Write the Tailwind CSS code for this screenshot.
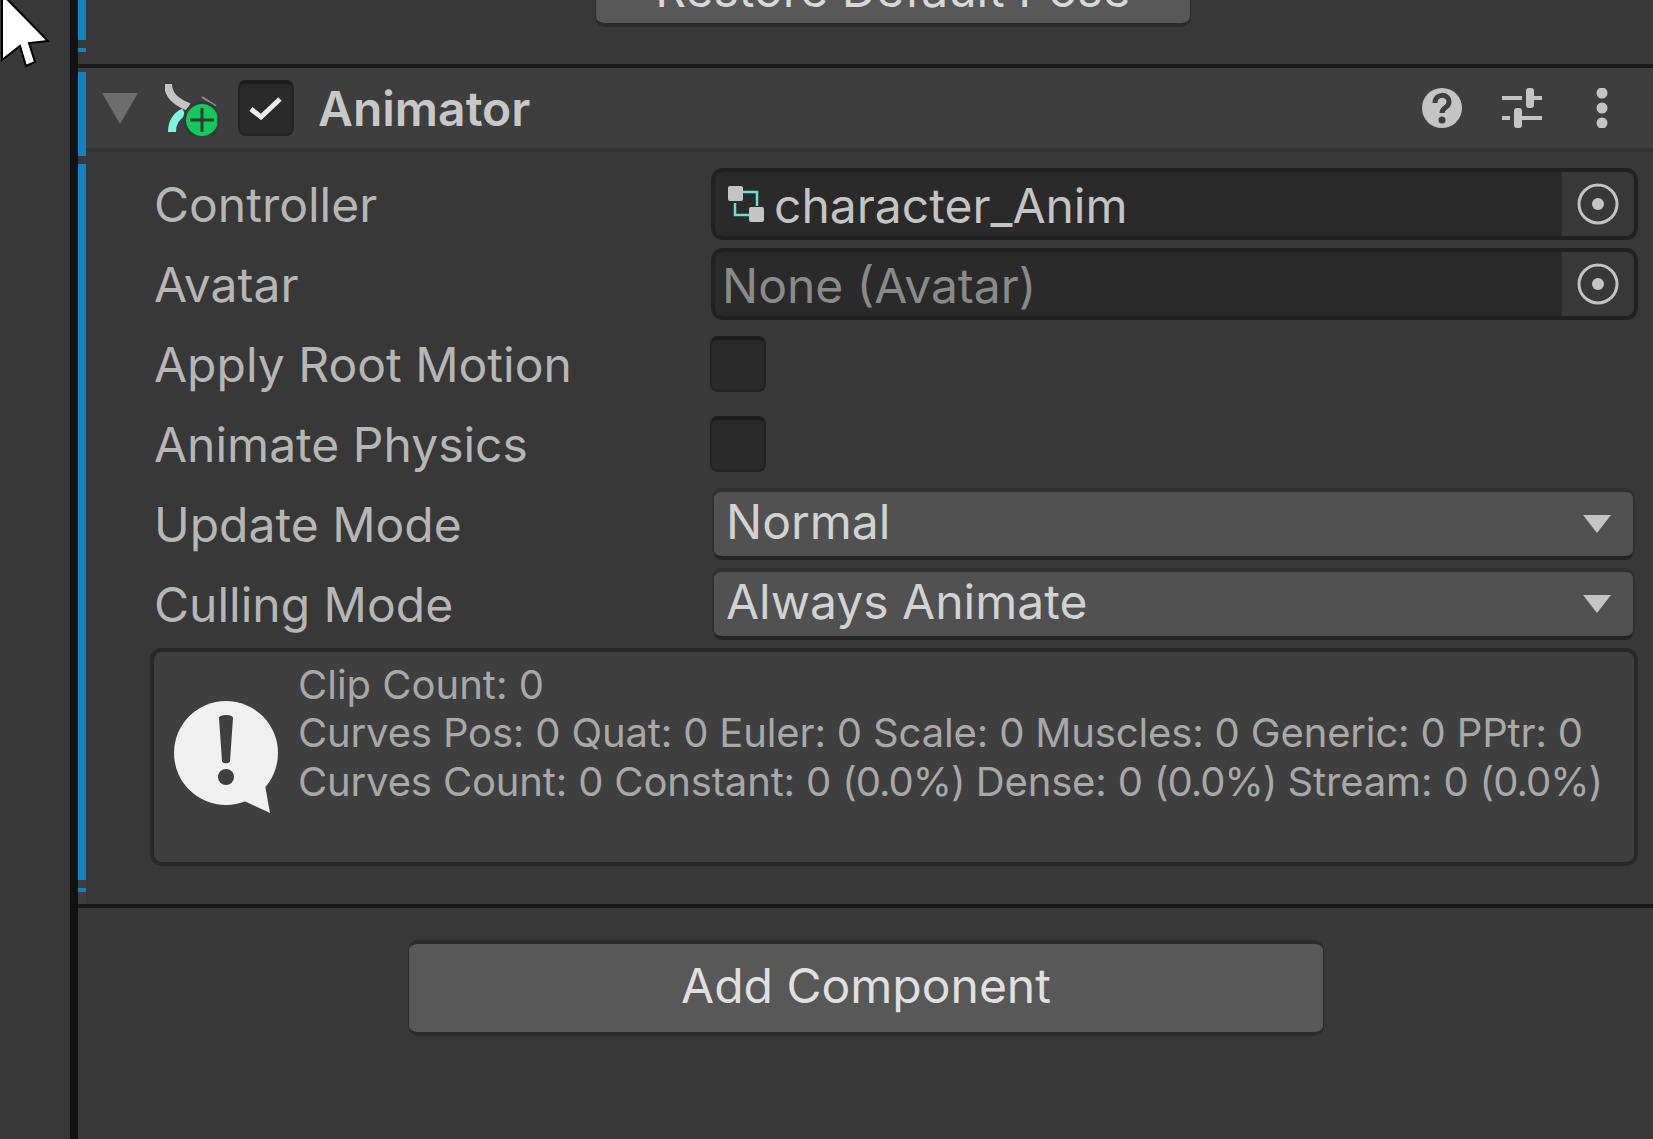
<!DOCTYPE html>
<html lang="en">
<head>
  <meta charset="UTF-8">
  <title>Inspector - Animator</title>
  <script src="https://cdn.jsdelivr.net/npm/@tailwindcss/browser@4"></script>
</head>
<body class="bg-[#383838] font-['Inter',sans-serif] text-[#b6b6b6] text-[48px] leading-none overflow-hidden h-[1139px] w-[1653px] relative">
  <div class="flex h-[1139px]">
    <!-- Left strip -->
    <div class="w-[78px] shrink-0 bg-[#383838] border-r-[8px] border-[#111111]"></div>

    <div class="flex-1 flex flex-col min-w-0">
      <!-- Transform section, scrolled off -->
      <div class="flex h-[64px] shrink-0 overflow-hidden">
        <div class="w-2 shrink-0 flex flex-col">
          <div class="h-[40px] bg-[#0d84c7]"></div>
          <div class="h-1 mt-2 bg-[#0d84c7]"></div>
        </div>
        <div class="ml-[509px] -mt-[53px] w-[596px] h-[80px] flex items-center justify-center pt-[6px] bg-[#585858] border-4 border-x-[1px] border-[#2a2a2a] rounded-[10px] text-[#d8d8d8]">Restore Default Pose</div>
      </div>
      <div class="h-1 shrink-0 bg-[#191919]"></div>

      <!-- Animator section -->
      <div class="flex shrink-0">
        <div class="w-2 shrink-0 flex flex-col pt-1 bg-[#3e3e3e]">
          <div class="h-[84px] bg-[#0d84c7]"></div>
          <div class="h-2 bg-[#383838]"></div>
          <div class="h-[716px] bg-[#0d84c7]"></div>
          <div class="h-1 mt-2 bg-[#0d84c7]"></div>
        </div>
        <div class="flex-1 min-w-0">
          <!-- Header -->
          <div class="h-[84px] bg-[#3e3e3e] border-b-4 border-[#333333] flex items-center">
            <svg class="ml-[16px] shrink-0" width="36" height="32" viewBox="0 0 36 32"><polygon points="0,1 36,1 18,32" fill="#6e6e6e"/></svg>
            <svg class="ml-[27px] shrink-0" width="52" height="56" viewBox="0 0 52 56">
              <path d="M3 4 C3 14 10 22 24 27" fill="none" stroke="#c4c4c4" stroke-width="8"/>
              <path d="M19 32 C11 36 7 42 7 52" fill="none" stroke="#7ff5e0" stroke-width="8"/>
              <path d="M37 17 L51 26" fill="none" stroke="#8a8a8a" stroke-width="2"/>
              <circle cx="37" cy="40" r="19" fill="#383838"/>
              <circle cx="37" cy="40" r="16" fill="#12c960"/>
              <path d="M37 28 V52 M25 40 H49" stroke="#2b3b30" stroke-width="3"/>
            </svg>
            <div class="ml-[21px] w-[56px] h-[56px] shrink-0 bg-[#2a2a2a] border-2 border-[#232323] border-t-4 border-t-[#1c1c1c] rounded-[8px] flex items-center justify-center">
              <svg width="36" height="30" viewBox="0 0 36 30"><path d="M3 15 L13 23 L32 5" fill="none" stroke="#ececec" stroke-width="5"/></svg>
            </div>
            <span class="ml-[24px] pt-[2px] font-semibold text-[#c8c8c8]">Animator</span>
            <div class="ml-auto flex items-center pr-[45px]">
              <svg width="40" height="40" viewBox="0 0 40 40">
                <circle cx="20" cy="20" r="20" fill="#c4c4c4"/>
                <path d="M13 15 C13 5 27 5 27 14 C27 20 20 19 20 25" fill="none" stroke="#3e3e3e" stroke-width="5"/>
                <circle cx="20" cy="32" r="3.5" fill="#3e3e3e"/>
              </svg>
              <svg class="ml-[40px]" width="40" height="40" viewBox="0 0 40 40" fill="#c4c4c4">
                <rect x="0" y="8" width="20" height="4"/><rect x="32" y="8" width="8" height="4"/>
                <rect x="24" y="0" width="8" height="20" rx="3"/>
                <rect x="0" y="28" width="8" height="4"/><rect x="20" y="28" width="20" height="4"/>
                <rect x="12" y="20" width="8" height="20" rx="3"/>
              </svg>
              <svg class="ml-[54px]" width="12" height="40" viewBox="0 0 12 40" fill="#c4c4c4">
                <circle cx="6" cy="5" r="5.5"/><circle cx="6" cy="20" r="5.5"/><circle cx="6" cy="35" r="5.5"/>
              </svg>
            </div>
          </div>

          <!-- Properties -->
          <div class="pt-4 pr-[15px] flex flex-col gap-2">
            <div class="h-[72px] flex items-center pl-[68px]">
              <div class="w-[557px] shrink-0 pt-[2px]">Controller</div>
              <div class="flex-1 h-[72px] flex bg-[#2a2a2a] border-4 border-[#212121] rounded-[12px] overflow-hidden">
                <div class="flex-1 flex items-center pl-[13px]">
                  <svg class="shrink-0" width="36" height="36" viewBox="0 0 36 36">
                    <path d="M15 6 H29 V20 M7 17 V29 H21" fill="none" stroke="#6be0cc" stroke-width="2.5"/>
                    <rect x="0" y="0" width="15" height="15" rx="2" fill="#c4c4c4"/>
                    <rect x="21" y="21" width="15" height="15" rx="2" fill="#c4c4c4"/>
                  </svg>
                  <span class="ml-[10px] pt-1 text-[#c4c4c4]">character_Anim</span>
                </div>
                <div class="w-[72px] bg-[#383838] flex items-center justify-center">
                  <svg width="42" height="42" viewBox="0 0 42 42"><circle cx="21" cy="21" r="19" fill="none" stroke="#c4c4c4" stroke-width="3"/><circle cx="21" cy="21" r="6" fill="#c4c4c4"/></svg>
                </div>
              </div>
            </div>
            <div class="h-[72px] flex items-center pl-[68px]">
              <div class="w-[557px] shrink-0 pt-[2px]">Avatar</div>
              <div class="flex-1 h-[72px] flex bg-[#2a2a2a] border-4 border-[#212121] rounded-[12px] overflow-hidden">
                <div class="flex-1 flex items-center pl-[7px] pt-1 text-[#8a8a8a]">None (Avatar)</div>
                <div class="w-[72px] bg-[#383838] flex items-center justify-center">
                  <svg width="42" height="42" viewBox="0 0 42 42"><circle cx="21" cy="21" r="19" fill="none" stroke="#c4c4c4" stroke-width="3"/><circle cx="21" cy="21" r="6" fill="#c4c4c4"/></svg>
                </div>
              </div>
            </div>
            <div class="h-[72px] flex items-center pl-[68px]">
              <div class="w-[556px] shrink-0 pt-[2px]">Apply Root Motion</div>
              <div class="w-[56px] h-[56px] bg-[#2a2a2a] border-2 border-[#232323] border-t-4 border-t-[#1c1c1c] rounded-[8px]"></div>
            </div>
            <div class="h-[72px] flex items-center pl-[68px]">
              <div class="w-[556px] shrink-0 pt-[2px]">Animate Physics</div>
              <div class="w-[56px] h-[56px] bg-[#2a2a2a] border-2 border-[#232323] border-t-4 border-t-[#1c1c1c] rounded-[8px]"></div>
            </div>
            <div class="h-[72px] flex items-center pl-[68px]">
              <div class="w-[558px] shrink-0 pt-[2px]">Update Mode</div>
              <div class="flex-1 mr-[3px] h-[72px] flex items-center justify-between pl-[12px] pr-[22px] pb-1 bg-[#515151] border-4 border-x-2 border-[#303030] border-b-[#232323] rounded-[10px] text-[#d2d2d2]">
                <span>Normal</span>
                <svg class="mt-1" width="28" height="18" viewBox="0 0 28 18"><polygon points="0,0 28,0 14,18" fill="#c4c4c4"/></svg>
              </div>
            </div>
            <div class="h-[72px] flex items-center pl-[68px]">
              <div class="w-[558px] shrink-0 pt-[2px]">Culling Mode</div>
              <div class="flex-1 mr-[3px] h-[72px] flex items-center justify-between pl-[12px] pr-[22px] pb-1 bg-[#515151] border-4 border-x-2 border-[#303030] border-b-[#232323] rounded-[10px] text-[#d2d2d2]">
                <span>Always Animate</span>
                <svg class="mt-1" width="28" height="18" viewBox="0 0 28 18"><polygon points="0,0 28,0 14,18" fill="#c4c4c4"/></svg>
              </div>
            </div>

            <!-- Clip info box -->
            <div class="ml-[64px] h-[218px] flex bg-[#3f3f3f] border-4 border-[#282828] rounded-[12px] text-[40px] text-[#a8a8a8] leading-[48px]">
              <svg class="ml-[20px] mt-[49px] shrink-0" width="106" height="114" viewBox="0 0 106 114">
                <circle cx="52" cy="52" r="52" fill="#f0f0f0"/>
                <path d="M91 84 L96 112 L68 99 Z" fill="#f0f0f0"/>
                <path d="M45 17 C45 13 59 13 59 17 L56 60 C56 63 48 63 48 60 Z" fill="#3f3f3f"/>
                <circle cx="52" cy="76" r="8" fill="#3f3f3f"/>
              </svg>
              <div class="ml-[18px] pt-[9px] whitespace-nowrap">
                <div>Clip Count: 0</div>
                <div class="tracking-[-0.15px]">Curves Pos: 0 Quat: 0 Euler: 0 Scale: 0 Muscles: 0 Generic: 0 PPtr: 0</div>
                <div class="mt-[1px] tracking-[-0.15px]">Curves Count: 0 Constant: 0 <span class="tracking-[-1px]">(0.0%)</span> Dense: 0 <span class="tracking-[-1px]">(0.0%)</span> Stream: 0 <span class="tracking-[-1px]">(0.0%)</span></div>
              </div>
            </div>
          </div>
          <div class="h-[38px]"></div>
        </div>
      </div>
      <div class="h-1 shrink-0 bg-[#191919]"></div>

      <!-- Add Component -->
      <div class="pt-[32px] pl-[330px]">
        <div class="w-[916px] h-[96px] flex items-center justify-center pb-1 bg-[#585858] border-4 border-x-[1px] border-[#2c2c2c] rounded-[10px] text-[#e0e0e0]">Add Component</div>
      </div>
    </div>
  </div>

  <!-- Mouse pointer over the window -->
  <svg class="absolute left-0 top-0" width="56" height="72" viewBox="0 0 56 72">
    <path d="M2 -6 L48 41 L29 43 L35 62 L26 66 L20 46 L2 60 Z" fill="#ffffff" stroke="#000000" stroke-width="2"/>
  </svg>
</body>
</html>
